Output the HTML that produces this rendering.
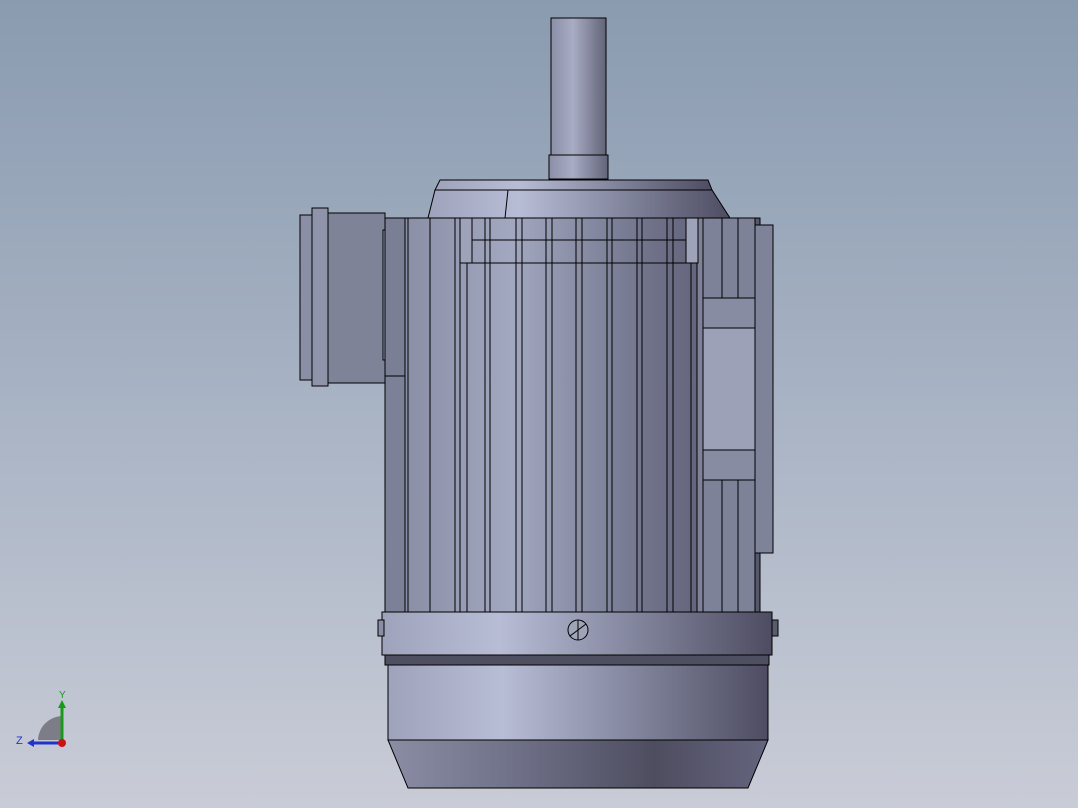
<!DOCTYPE html><html><head><style>html,body{margin:0;padding:0}body{width:1078px;height:808px;overflow:hidden;background:linear-gradient(#8a9bb0,#a8b3c4 50%,#c9ccd7)}svg{display:block}</style></head><body>
<svg width="1078" height="808" viewBox="0 0 1078 808" xmlns="http://www.w3.org/2000/svg">
<defs>
<linearGradient id="h" x1="0" x2="1"><stop offset="0" stop-color="#8a8fa6"/><stop offset=".3" stop-color="#a2a8c0"/><stop offset=".7" stop-color="#6e7188"/><stop offset="1" stop-color="#56566c"/></linearGradient>
<linearGradient id="h2" x1="0" x2="1"><stop offset="0" stop-color="#9ea3bb"/><stop offset=".3" stop-color="#b8bdd6"/><stop offset=".7" stop-color="#7a7d94"/><stop offset="1" stop-color="#4e4c62"/></linearGradient>
<linearGradient id="sh" x1="0" x2="1"><stop offset="0" stop-color="#8a8ea6"/><stop offset=".4" stop-color="#a8acc4"/><stop offset="1" stop-color="#626478"/></linearGradient>
<linearGradient id="bot" x1="0" x2="1"><stop offset="0" stop-color="#8a8da4"/><stop offset=".3" stop-color="#72748c"/><stop offset=".7" stop-color="#4e4d60"/><stop offset="1" stop-color="#64647e"/></linearGradient>
</defs>
<g stroke="#000" stroke-width="1">
<rect x="551" y="18" width="55" height="140" fill="url(#sh)"/>
<rect x="549" y="155" width="59" height="24" fill="url(#sh)"/>
<polygon points="440,180 708,180 712,190 435,190" fill="url(#h2)"/>
<polygon points="435,190 712,190 730,218 428,218" fill="url(#h2)"/>
<line x1="508" y1="190" x2="505" y2="218"/>
<rect x="320" y="213" width="65" height="170" fill="#7e8398"/>
<rect x="300" y="215" width="14" height="165" fill="#8a8fa6"/>
<rect x="312" y="208" width="16" height="178" fill="#8f94ab"/>
<rect x="383" y="230" width="7" height="130" fill="#9ca1b6"/>
<rect x="385" y="218" width="24" height="158" fill="#7a7f95"/>
<rect x="385" y="376" width="25" height="236" fill="#7c8197"/>
<rect x="405" y="218" width="355" height="394" fill="url(#h)"/>
<rect x="697" y="218" width="58" height="394" fill="#7e8298"/>
<g fill="none">
<line x1="408" y1="218" x2="408" y2="612"/><line x1="430" y1="218" x2="430" y2="612"/>
<line x1="455" y1="218" x2="455" y2="612"/><line x1="460" y1="218" x2="460" y2="612"/>
<line x1="467" y1="218" x2="467" y2="612"/>
<line x1="485" y1="218" x2="485" y2="612"/><line x1="490" y1="218" x2="490" y2="612"/>
<line x1="516" y1="218" x2="516" y2="612"/><line x1="522" y1="218" x2="522" y2="612"/>
<line x1="546" y1="218" x2="546" y2="612"/><line x1="552" y1="218" x2="552" y2="612"/>
<line x1="576" y1="218" x2="576" y2="612"/><line x1="582" y1="218" x2="582" y2="612"/>
<line x1="607" y1="218" x2="607" y2="612"/><line x1="612" y1="218" x2="612" y2="612"/>
<line x1="637" y1="218" x2="637" y2="612"/><line x1="642" y1="218" x2="642" y2="612"/>
<line x1="667" y1="218" x2="667" y2="612"/><line x1="673" y1="218" x2="673" y2="612"/>
<line x1="691" y1="218" x2="691" y2="612"/><line x1="697" y1="218" x2="697" y2="612"/>
<line x1="703" y1="218" x2="703" y2="612"/>
<line x1="722" y1="480" x2="722" y2="612"/><line x1="738" y1="480" x2="738" y2="612"/>
<line x1="722" y1="218" x2="722" y2="298"/><line x1="738" y1="218" x2="738" y2="298"/>
<line x1="472" y1="240" x2="686" y2="240"/><line x1="472" y1="263" x2="686" y2="263"/>
</g>
<g fill="#9ea3ba">
<rect x="460" y="218" width="12" height="45"/><rect x="686" y="218" width="12" height="45"/>
</g>
<rect x="703" y="298" width="52" height="182" fill="#878ca2"/>
<rect x="703" y="328" width="52" height="122" fill="#9ca1b7"/>
<rect x="755" y="225" width="18" height="328" fill="#7e8399"/>
<rect x="382" y="612" width="390" height="43" fill="url(#h2)"/>
<rect x="385" y="655" width="384" height="10" fill="#4e4f60"/>
<rect x="388" y="665" width="380" height="75" fill="url(#h2)"/>
<polygon points="388,740 768,740 748,788 408,788" fill="url(#bot)"/>
<circle cx="578" cy="630" r="10" fill="#a0a4b8"/>
<line x1="578" y1="620" x2="578" y2="640"/><line x1="570" y1="636" x2="586" y2="624"/>
<rect x="378" y="620" width="6" height="16" fill="#8a8ea4"/><rect x="772" y="620" width="6" height="16" fill="#5a5a70"/>
</g>
<path d="M38 740 A25 25 0 0 1 62 716 L62 740 Z" fill="#7d7d88"/>
<line x1="62" y1="742" x2="62" y2="706" stroke="#1a9a1a" stroke-width="3"/>
<polygon points="58,708 66,708 62,700" fill="#1a9a1a"/>
<line x1="62" y1="743" x2="32" y2="743" stroke="#2233cc" stroke-width="3"/>
<polygon points="34,739 34,747 27,743" fill="#2233cc"/>
<circle cx="62" cy="743" r="4" fill="#cc1111"/>
<text x="59" y="698" font-family="Liberation Sans,sans-serif" font-size="10" fill="#1a9a1a">Y</text>
<text x="16" y="744" font-family="Liberation Sans,sans-serif" font-size="11" fill="#2233cc">Z</text>
</svg></body></html>
